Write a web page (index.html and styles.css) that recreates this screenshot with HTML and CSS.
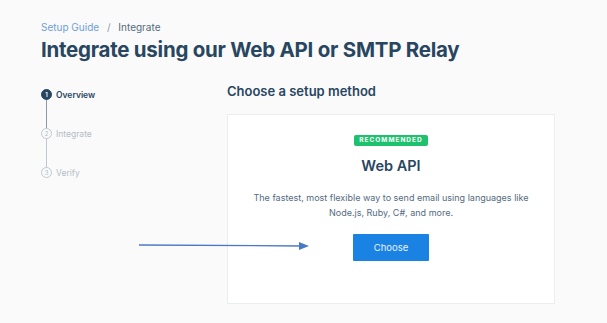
FILE: index.html
```html
<!DOCTYPE html>
<html lang="en">
<head>
    <meta charset="UTF-8">
    <meta name="viewport" content="width=device-width, initial-scale=1.0">
    <title>Integrate</title>
    <link rel="stylesheet" href="styles.css">
</head>
<body>
    <div class="page">
        <div class="breadcrumb">
            <a href="#">Setup Guide</a>
            <span class="sep">/</span>
            <span>Integrate</span>
        </div>
        <h1>Integrate using our Web API or SMTP Relay</h1>

        <div class="content">
            <ul class="steps">
                <li class="step active"><span class="num">1</span>Overview</li>
                <li class="step"><span class="num">2</span>Integrate</li>
                <li class="step"><span class="num">3</span>Verify</li>
            </ul>

            <div class="main">
                <h2>Choose a setup method</h2>
                <div class="card">
                    <span class="badge">Recommended</span>
                    <h3>Web API</h3>
                    <p>The fastest, most flexible way to send email using languages like Node.js, Ruby, C#, and more.</p>
                    <button class="btn">Choose</button>
                </div>
            </div>
        </div>
    </div>

    <svg class="arrow" width="180" height="12" viewBox="0 0 180 12">
        <line x1="0" y1="5" x2="162" y2="6" stroke="#4a78c8" stroke-width="1.3"/>
        <path d="M160 2 L170 6 L160 10 Z" fill="#4a78c8"/>
    </svg>
</body>
</html>
```

FILE: styles.css
```css
body {
    margin: 0;
    font-family: 'Inter', 'Noto Sans', sans-serif;
    background-color: #fafafa;
    color: #294661;
}
.page {
    padding: 20px 41px 0;
}
.breadcrumb {
    font-size: 10px;
    color: #546b81;
    height: 13px;
    line-height: 13px;
    margin-top: 1px;
}
.breadcrumb a {
    color: #6f9fd8;
    text-decoration: none;
}
.breadcrumb .sep {
    margin: 0 5px;
    color: #8a9aaa;
}
h1 {
    margin: 3px 0 0;
    font-size: 20.5px;
    font-weight: 700;
    letter-spacing: -0.25px;
    line-height: 26px;
    color: #294661;
}
.content {
    display: flex;
    margin-top: 19px;
}
.steps {
    list-style: none;
    margin: 0;
    padding: 0;
    width: 186px;
    margin-top: 7px;
}
.step {
    position: relative;
    display: flex;
    align-items: center;
    height: 11px;
    margin-bottom: 28px;
    font-size: 8.5px;
    color: #b4bcc6;
}
.step .num {
    width: 9px;
    height: 9px;
    border: 1px solid #c0c7cf;
    border-radius: 50%;
    font-size: 6px;
    display: flex;
    align-items: center;
    justify-content: center;
    margin-right: 4px;
    color: #b4bcc6;
    background: #fafafa;
}
.step.active {
    color: #294661;
    font-weight: 600;
}
.step.active .num {
    background: #294661;
    border-color: #294661;
    color: #fff;
}
.step + .step::before {
    content: '';
    position: absolute;
    left: 5px;
    top: -28px;
    width: 1px;
    height: 28px;
    background: #c0c7cf;
}
.step.active + .step::before {
    background: #8a9aaa;
}
.main {
    width: 328px;
}
h2 {
    margin: 0;
    font-size: 13px;
    font-weight: 600;
    line-height: 18px;
    color: #294661;
}
.card {
    margin-top: 14px;
    height: 190px;
    background: #fff;
    border: 1px solid #ebeef1;
    display: flex;
    flex-direction: column;
    align-items: center;
    text-align: center;
    padding-top: 20px;
    box-sizing: border-box;
}
.badge {
    background: #1ec26e;
    color: #fff;
    font-size: 6.5px;
    font-weight: 700;
    letter-spacing: 1px;
    text-transform: uppercase;
    padding: 1px 5px;
    line-height: 9px;
    border-radius: 2px;
}
h3 {
    margin: 11px 0 0;
    font-size: 14.5px;
    font-weight: 600;
    line-height: 18px;
    color: #294661;
}
p {
    margin: 15px 0 0;
    width: 290px;
    font-size: 9px;
    line-height: 15px;
    color: #546b81;
}
.btn {
    margin-top: 14px;
    width: 76px;
    height: 27px;
    border: none;
    border-radius: 1px;
    background: #1a82e2;
    color: #e8f2fc;
    font-family: inherit;
    font-size: 9.5px;
    cursor: pointer;
}
.arrow {
    position: absolute;
    left: 139px;
    top: 240px;
}
```
